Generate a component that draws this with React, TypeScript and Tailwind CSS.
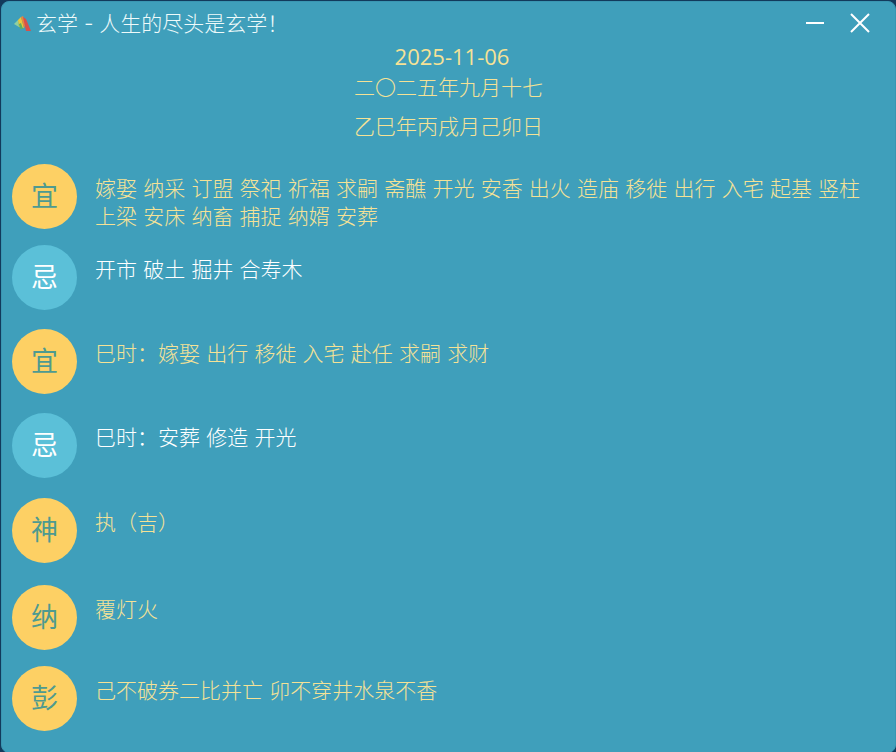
const cjk = "font-['Inter','Noto_Sans_CJK_SC',sans-serif]"

interface RowProps {
    label: string
    text: string
    bad?: boolean
    className?: string
}

function Row({ label, text, bad, className }: RowProps) {
    return (
        <div className={`flex gap-[18px] ${className ?? ''}`}>
            <div className={`w-[65px] h-[65px] shrink-0 rounded-full flex items-center justify-center text-[27px] leading-none ${bad ? 'bg-[#5bc0d8] text-white' : 'bg-[#fdd064] text-[#4e9a90]'}`}>
                {label}
            </div>
            <div className={`flex-1 pt-[11px] text-[21px] leading-[28px] font-light [word-spacing:0.3px] ${bad ? 'text-white' : 'text-[#f5e296]'}`}>
                {text}
            </div>
        </div>
    )
}

function Logo() {
    return (
        <svg width="20" height="20" viewBox="0 0 20 20" className="shrink-0">
            <path d="M3 10 L7 6 L8 13 Z" fill="#8fd0a0" />
            <path d="M7 6 L10 3 L13 14 L8 13 Z" fill="#e8c83c" />
            <path d="M10 3 L12 2 L15 9 L13 14 Z" fill="#e8883c" />
            <path d="M12 3 L15 5 L20 17 L15 17 Z" fill="#d8504a" />
            <path d="M8 10 L10 9 L12 15 L9 15 Z" fill="#5cb060" />
        </svg>
    )
}

export default function App() {
    return (
        <div className={`w-[896px] h-[752px] overflow-hidden bg-[#123a5c] ${cjk}`}>
            <div className="h-full ml-px mt-px rounded-[8px] bg-[#3f9fbb] border border-[#3a96b2]">
                <div className="h-[44px] flex items-center pl-[9px] pr-[25px]">
                    <Logo />
                    <span className="ml-[5px] text-[21px] font-light text-[#eefafa]">玄学 - 人生的尽头是玄学！</span>
                    <div className="ml-auto flex items-center gap-[26px] mt-[-2px]">
                        <div className="w-[18px] h-[2px] bg-white" />
                        <svg width="20" height="20" viewBox="0 0 20 20" fill="none" stroke="#fff" strokeWidth="2">
                            <path d="M1 1 L19 19 M19 1 L1 19" />
                        </svg>
                    </div>
                </div>
                <div className="flex flex-col items-center text-[#f5e296] text-[21px] font-light">
                    <div className="h-[28px] leading-[28px] mt-[-4px] pl-[7px] font-['Open_Sans'] font-normal text-[22px]">2025-11-06</div>
                    <div className="h-[30px] leading-[30px] mt-[3px]">二〇二五年九月十七</div>
                    <div className="h-[30px] leading-[30px] mt-[9px]">乙巳年丙戌月己卯日</div>
                </div>
                <div className="pl-[10px] pr-[30px] mt-[22px]">
                    <Row label="宜" text="嫁娶 纳采 订盟 祭祀 祈福 求嗣 斋醮 开光 安香 出火 造庙 移徙 出行 入宅 起基 竖柱 上梁 安床 纳畜 捕捉 纳婿 安葬" className="mb-[14px]" />
                    <Row label="忌" text="开市 破土 掘井 合寿木" bad className="mb-[19px]" />
                    <Row label="宜" text="巳时：嫁娶 出行 移徙 入宅 赴任 求嗣 求财" className="mb-[19px]" />
                    <Row label="忌" text="巳时：安葬 修造 开光" bad className="mb-[20px]" />
                    <Row label="神" text="执（吉）" className="mb-[22px]" />
                    <Row label="纳" text="覆灯火" className="mb-[16px]" />
                    <Row label="彭" text="己不破券二比并亡 卯不穿井水泉不香" />
                </div>
            </div>
        </div>
    )
}
